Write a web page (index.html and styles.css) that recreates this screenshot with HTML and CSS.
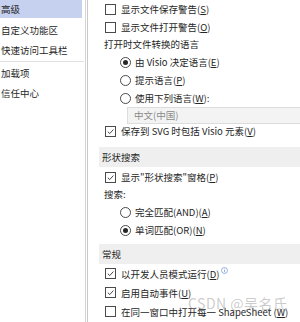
FILE: index.html
```html
<!DOCTYPE html>
<html lang="zh-CN">
<head>
<meta charset="utf-8">
<link rel="stylesheet" href="styles.css">
</head>
<body>
<div class="app">
  <nav class="nav">
    <div class="nav-item selected">高级</div>
    <div class="nav-item second">自定义功能区</div>
    <div class="nav-item">快速访问工具栏</div>
    <div class="nav-sep"></div>
    <div class="nav-item">加载项</div>
    <div class="nav-item">信任中心</div>
  </nav>
  <div class="divider"></div>
  <main class="main">
    <div class="group">
      <div class="row"><span class="cb"></span>显示文件保存警告(<u>S</u>)</div>
      <div class="row"><span class="cb"></span>显示文件打开警告(<u>O</u>)</div>
      <div class="label">打开时文件转换的语言</div>
      <div class="row sub"><span class="rb on"></span>由 Visio 决定语言(<u>E</u>)</div>
      <div class="row sub"><span class="rb"></span>提示语言(<u>P</u>)</div>
      <div class="row sub"><span class="rb"></span>使用下列语言(<u>W</u>):</div>
      <div class="select">中文(中国)</div>
      <div class="row"><span class="cb on"><svg viewBox="0 0 10 10"><path d="M2 5.2 L4.2 7.3 L8.2 2.8" fill="none" stroke="#333" stroke-width="1"/></svg></span>保存到 SVG 时包括 Visio 元素(<u>V</u>)</div>
    </div>
    <div class="header first">形状搜索</div>
    <div class="group">
      <div class="row"><span class="cb on"><svg viewBox="0 0 10 10"><path d="M2 5.2 L4.2 7.3 L8.2 2.8" fill="none" stroke="#333" stroke-width="1"/></svg></span>显示&quot;形状搜索&quot;窗格(<u>P</u>)</div>
      <div class="label">搜索:</div>
      <div class="row sub"><span class="rb"></span>完全匹配(AND)(<u>A</u>)</div>
      <div class="row sub"><span class="rb on"></span>单词匹配(OR)(<u>N</u>)</div>
    </div>
    <div class="header second">常规</div>
    <div class="group last">
      <div class="row"><span class="cb on"><svg viewBox="0 0 10 10"><path d="M2 5.2 L4.2 7.3 L8.2 2.8" fill="none" stroke="#333" stroke-width="1"/></svg></span>以开发人员模式运行(<u>D</u>)<svg class="info" viewBox="0 0 8 8"><circle cx="4" cy="4" r="3.4" fill="none" stroke="#6b93d6" stroke-width="0.8"/><rect x="3.6" y="3.4" width="0.8" height="2.6" fill="#6b93d6"/><rect x="3.6" y="2" width="0.8" height="0.8" fill="#6b93d6"/></svg></div>
      <div class="row"><span class="cb on"><svg viewBox="0 0 10 10"><path d="M2 5.2 L4.2 7.3 L8.2 2.8" fill="none" stroke="#333" stroke-width="1"/></svg></span>启用自动事件(<u>U</u>)</div>
      <div class="row"><span class="cb"></span>在同一窗口中打开每一 ShapeSheet (<u>W</u>)</div>
    </div>
  </main>
  <div class="watermark">CSDN @吴名氏</div>
</div>
</body>
</html>
```
FILE: styles.css
```css
html, body {
  margin: 0;
  padding: 0;
  background: #fff;
  overflow: hidden;
}
.app {
  position: relative;
  display: flex;
  width: 300px;
  height: 322px;
  font-family: "Noto Sans CJK SC", "Noto Sans", sans-serif;
  font-size: 9.5px;
  color: #262626;
}
.nav {
  width: 86px;
  flex: none;
  border-right: 1px solid #d6d6d6;
  box-sizing: border-box;
}
.nav-item {
  height: 20px;
  line-height: 20px;
  margin-right: 3px;
  padding-left: 1px;
  white-space: nowrap;
}
.nav-item.selected {
  background: #c6d1ef;
  height: 18px;
  line-height: 18px;
}
.nav-item.second {
  margin-top: 2px;
}
.nav-sep {
  height: 1px;
  background: #e2e2e2;
  margin: 1px 1px 1px 0;
}
.divider {
  width: 1px;
  margin-left: 1px;
  background: #c9c9c9;
  flex: none;
}
.main {
  flex: 1;
  padding-left: 11px;
  overflow: hidden;
}
.group {
  padding-left: 6px;
}
.row {
  height: 18px;
  display: flex;
  align-items: center;
  white-space: nowrap;
}
.group.last .row {
  height: 19px;
}
.row.sub {
  padding-left: 15px;
}
.label {
  height: 17px;
  line-height: 17px;
  margin-left: -1px;
  white-space: nowrap;
}
.cb {
  width: 9px;
  height: 9px;
  border: 1px solid #4a4a4a;
  margin-right: 5px;
  flex: none;
  display: flex;
  background: #fff;
}
.cb svg {
  width: 9px;
  height: 9px;
}
.rb {
  width: 9px;
  height: 9px;
  border: 1px solid #4a4a4a;
  border-radius: 50%;
  margin-right: 4px;
  flex: none;
  display: flex;
  align-items: center;
  justify-content: center;
}
.rb.on::after {
  content: "";
  width: 5px;
  height: 5px;
  border-radius: 50%;
  background: #262626;
}
u {
  text-decoration-thickness: 1px;
  text-underline-offset: 1px;
}
.select {
  margin-left: 22px;
  height: 15px;
  line-height: 15px;
  background: #f3f3f3;
  border: 1px solid #dcdcdc;
  border-right: none;
  color: #8a8a8a;
  padding-left: 6px;
  margin-bottom: -2px;
}
.header {
  height: 20px;
  line-height: 20px;
  background: #efefef;
  padding-left: 3px;
  white-space: nowrap;
}
.header.first {
  margin-top: 7px;
  margin-bottom: 1px;
}
.header.second {
  margin-top: 5px;
}
.info {
  width: 7px;
  height: 7px;
  margin-left: 2px;
  align-self: flex-start;
  margin-top: 3px;
}
.watermark {
  position: absolute;
  left: 188px;
  top: 293px;
  font-size: 14px;
  letter-spacing: 0.5px;
  color: rgba(140, 140, 140, 0.45);
  white-space: nowrap;
}
```
